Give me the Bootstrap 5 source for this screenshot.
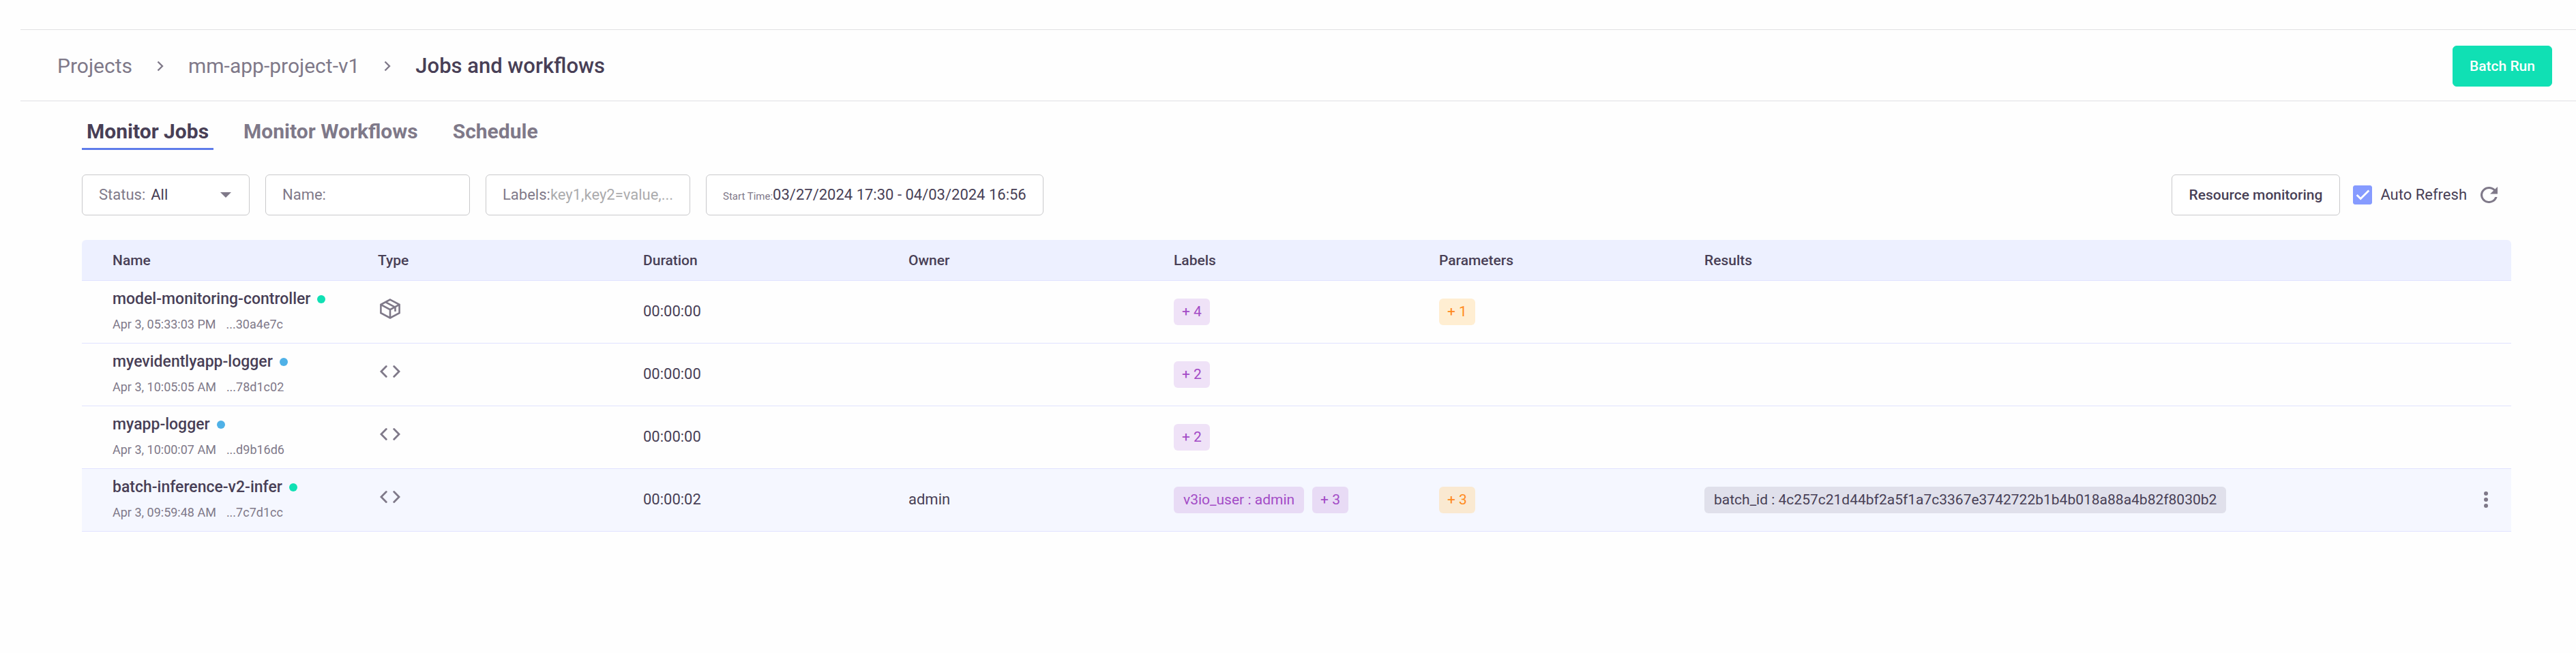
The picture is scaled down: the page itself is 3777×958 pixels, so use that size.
<!DOCTYPE html>
<html lang="en">
<head>
<meta charset="utf-8">
<meta name="viewport" content="width=device-width, initial-scale=1">
<title>Jobs and workflows</title>
<link href="https://cdn.jsdelivr.net/npm/bootstrap@5.3.0/dist/css/bootstrap.min.css" rel="stylesheet">
<style>
  :root { --ink: #483f56; --muted: #7f7989; --rule: #e0e2ff; --field: #c9c9cb; }
  body { font-family: Roboto, "Liberation Sans", sans-serif; font-size: 22px; line-height: 28px; color: var(--ink); background: #fefefe; }
  a { color: inherit; text-decoration: none; }
  .page-top { margin: 43px 0 0 30px; padding: 23px 35px 20px 54px; border-top: 1px solid #e0e0e2; border-bottom: 2px solid #eeeef0; }
  .crumbs { font-size: 30px; line-height: 36px; color: var(--muted); }
  .crumbs .breadcrumb-item + .breadcrumb-item { padding: 0; }
  .crumbs .breadcrumb-item + .breadcrumb-item::before { display: none; }
  .crumbs .active { color: var(--ink); font-weight: 500; font-size: 31px; }
  .crumb-sep { width: 36px; height: 36px; margin: 0 23px; }
  .btn { font-size: 21px; font-weight: 500; line-height: 28px; height: 60px; padding: 0 24px; border-radius: 6px; }
  .btn-run { --bs-btn-color: #fff; --bs-btn-bg: #10e0b4; --bs-btn-border-color: #10e0b4; --bs-btn-hover-color: #fff; --bs-btn-hover-bg: #0dcfa6; }
  .btn-plain { --bs-btn-color: var(--ink); --bs-btn-bg: #fff; --bs-btn-border-color: var(--field); padding: 0 25px; }
  .workspace { padding: 26px 95px 0 120px; }
  .tab-bar { gap: 37px; font-size: 30px; line-height: 36px; }
  .tab-bar .nav-link { font-weight: 700; color: var(--muted); padding: 0 7px 6px; border-bottom: 3px solid transparent; }
  .tab-bar .nav-link.active { color: var(--ink); border-color: #5e7bea; }
  .filters { gap: 23px; margin-top: 36px; }
  .field { height: 60px; padding: 0 24px; border: 1px solid var(--field); border-radius: 6px; background: #fff; color: var(--muted); }
  .field input, .field select { min-width: 0; flex: 1 1 0; border: 0; padding: 0; outline: 0; background-color: transparent; color: var(--ink); font-size: 22px; }
  .field input::placeholder { color: #ababad; opacity: 1; }
  .field-status { width: 246px; }
  .field-text { width: 300px; }
  .field-date { width: 495px; padding-right: 12px; }
  .field-date label { font-size: 15px; padding-top: 4px; }
  .field select { appearance: none; margin-left: 8px; background: url("data:image/svg+xml,%3Csvg xmlns='http://www.w3.org/2000/svg' viewBox='0 0 16 8'%3E%3Cpath d='M0 0h16L8 8z' fill='%237f7989'/%3E%3C/svg%3E") no-repeat right 2px center / 16px 8px; }
  .form-check-input.auto { width: 28px; height: 28px; margin: 0 12px 0 19px; border-radius: 3px; }
  .form-check-input.auto:checked { background-color: #869bff; border-color: #869bff; background-image: url("data:image/svg+xml,%3Csvg xmlns='http://www.w3.org/2000/svg' viewBox='0 0 28 28'%3E%3Cpath d='M5 14l6 6L24 7' fill='none' stroke='%23fff' stroke-width='3'/%3E%3C/svg%3E"); }
  .icon-btn { border: 0; padding: 0; background: none; color: var(--muted); line-height: 0; }
  .reload { margin: 0 20px; }
  .jobs { display: block; margin: 36px 0 0; color: var(--ink); }
  .jobs thead, .jobs tbody { display: block; }
  .jobs tr { display: grid; grid-template-columns: repeat(6, minmax(0, 1fr)) minmax(0, 2fr) minmax(0, 1fr); align-items: center; padding: 0 16px 0 45px; border-bottom: 1px solid var(--rule); height: 92px; }
  .jobs thead tr { height: 60px; background: #edf0ff; border-radius: 6px 6px 0 0; font-size: 21px; }
  .jobs th { font-weight: 500; }
  .jobs th { padding: 0; }
  .jobs td { padding: 0 0 2px; }
  .jobs tr.picked { background: #f5f7ff; }
  .job-name { font-size: 23px; font-weight: 500; line-height: 28px; }
  .job-meta { font-size: 18px; line-height: 24px; margin-top: 11px; gap: 15px; color: var(--muted); font-weight: 400; }
  .dot { width: 12px; height: 12px; margin-left: 10px; border-radius: 50%; background: #4fb1e7; }
  .dot-done { background: #10e0b4; }
  .jobs td.kind { color: var(--muted); line-height: 0; padding: 0 0 10px 3px; }
  .jobs td.chips { gap: 12px; padding: 0; }
  .chip { font-size: 21px; line-height: 39px; padding: 0 12px; border-radius: 6px; white-space: nowrap; }
  .chip-pair { padding: 0 14px; }
  .chip-label { background: #efe2f7; color: #a34bc6; }
  .chip-param { background: #ffeed2; color: #ff8a1c; }
  .picked .chip-label { background: #e8dbf5; }
  .picked .chip-param { background: #fae9d1; }
  .chip-result { background: #e0e0eb; }
  .row-menu { padding: 8px; }
</style>
</head>
<body>
<svg class="d-none" xmlns="http://www.w3.org/2000/svg">
  <symbol id="sep" viewBox="0 0 36 36"><path d="M14.500 11.500 21 18l-6.500 6.500" fill="none" stroke="currentColor" stroke-width="2.400"/></symbol>
  <symbol id="code" viewBox="0 0 30 30"><path d="M9.300 7.500 1.900 15l7.400 7.500M20.700 7.500 28.100 15l-7.400 7.500" fill="none" stroke="currentColor" stroke-width="2.800" stroke-linecap="round"/></symbol>
  <symbol id="box" viewBox="0 0 30 30"><path d="M15 1.600 28.600 8.900v12.200L15 28.400 1.400 21.100V8.900zM1.400 8.900 15 16.200l13.600-7.300M15 16.200v12.200M8.200 5.200 22.500 12.800V19" fill="none" stroke="currentColor" stroke-width="2.600"/></symbol>
</svg>

<header class="page-top d-flex align-items-start justify-content-between">
  <nav aria-label="breadcrumb" class="align-self-center">
    <ol class="breadcrumb crumbs mb-0 align-items-center">
      <li class="breadcrumb-item"><a href="#">Projects</a></li>
      <li class="d-flex" aria-hidden="true"><svg class="crumb-sep"><use href="#sep"/></svg></li>
      <li class="breadcrumb-item"><a href="#">mm-app-project-v1</a></li>
      <li class="d-flex" aria-hidden="true"><svg class="crumb-sep"><use href="#sep"/></svg></li>
      <li class="breadcrumb-item active" aria-current="page">Jobs and workflows</li>
    </ol>
  </nav>
  <button type="button" class="btn btn-run">Batch Run</button>
</header>

<main class="workspace">
  <nav class="nav tab-bar">
    <a class="nav-link active" href="#">Monitor Jobs</a>
    <a class="nav-link" href="#">Monitor Workflows</a>
    <a class="nav-link" href="#">Schedule</a>
  </nav>

  <form class="filters d-flex flex-wrap align-items-center">
    <div class="field field-status d-flex align-items-center">
      <label for="status">Status:</label>
      <select id="status"><option>All</option></select>
    </div>
    <div class="field field-text d-flex align-items-center">
      <label for="name">Name:</label>
      <input id="name" type="text">
    </div>
    <div class="field field-text d-flex align-items-center">
      <label for="labels">Labels:</label>
      <input id="labels" type="text" placeholder="key1,key2=value,...">
    </div>
    <div class="field field-date d-flex align-items-center">
      <label for="start">Start Time:</label>
      <input id="start" type="text" value="03/27/2024 17:30 - 04/03/2024 16:56">
    </div>
    <div class="d-flex align-items-center ms-auto">
      <button type="button" class="btn btn-plain">Resource monitoring</button>
      <input class="form-check-input auto" type="checkbox" id="auto" checked>
      <label for="auto">Auto Refresh</label>
      <button type="button" class="icon-btn reload" aria-label="Refresh">
        <svg width="25" height="24" viewBox="4 4 16 16" preserveAspectRatio="none"><path fill="currentColor" d="M17.650 6.350A7.960 7.960 0 0 0 12 4a8 8 0 1 0 7.730 10h-2.080A6 6 0 1 1 12 6c1.660 0 3.140.690 4.220 1.780L13 11h7V4z"/></svg>
      </button>
    </div>
  </form>

  <table class="jobs">
    <thead>
      <tr><th>Name</th><th>Type</th><th>Duration</th><th>Owner</th><th>Labels</th><th>Parameters</th><th>Results</th><th aria-label="Actions"></th></tr>
    </thead>
    <tbody>
      <tr>
        <td><div class="job-name d-flex align-items-center"><a href="#">model-monitoring-controller</a><span class="dot dot-done"></span></div><div class="job-meta d-flex"><span>Apr 3, 05:33:03 PM</span><span>...30a4e7c</span></div></td>
        <td class="kind"><svg width="30" height="30"><use href="#box"/></svg></td>
        <td>00:00:00</td><td></td>
        <td class="chips d-flex"><span class="chip chip-label">+ 4</span></td>
        <td class="chips d-flex"><span class="chip chip-param">+ 1</span></td>
        <td></td><td></td>
      </tr>
      <tr>
        <td><div class="job-name d-flex align-items-center"><a href="#">myevidentlyapp-logger</a><span class="dot"></span></div><div class="job-meta d-flex"><span>Apr 3, 10:05:05 AM</span><span>...78d1c02</span></div></td>
        <td class="kind"><svg width="30" height="30"><use href="#code"/></svg></td>
        <td>00:00:00</td><td></td>
        <td class="chips d-flex"><span class="chip chip-label">+ 2</span></td>
        <td></td><td></td><td></td>
      </tr>
      <tr>
        <td><div class="job-name d-flex align-items-center"><a href="#">myapp-logger</a><span class="dot"></span></div><div class="job-meta d-flex"><span>Apr 3, 10:00:07 AM</span><span>...d9b16d6</span></div></td>
        <td class="kind"><svg width="30" height="30"><use href="#code"/></svg></td>
        <td>00:00:00</td><td></td>
        <td class="chips d-flex"><span class="chip chip-label">+ 2</span></td>
        <td></td><td></td><td></td>
      </tr>
      <tr class="picked">
        <td><div class="job-name d-flex align-items-center"><a href="#">batch-inference-v2-infer</a><span class="dot dot-done"></span></div><div class="job-meta d-flex"><span>Apr 3, 09:59:48 AM</span><span>...7c7d1cc</span></div></td>
        <td class="kind"><svg width="30" height="30"><use href="#code"/></svg></td>
        <td>00:00:02</td><td>admin</td>
        <td class="chips d-flex"><span class="chip chip-pair chip-label">v3io_user : admin</span><span class="chip chip-label">+ 3</span></td>
        <td class="chips d-flex"><span class="chip chip-param">+ 3</span></td>
        <td class="chips d-flex"><span class="chip chip-pair chip-result">batch_id : 4c257c21d44bf2a5f1a7c3367e3742722b1b4b018a88a4b82f8030b2</span></td>
        <td class="text-end"><button type="button" class="icon-btn row-menu" aria-label="Row actions"><svg width="26" height="24" viewBox="0 0 26 24" fill="currentColor"><circle cx="13" cy="3" r="3"/><circle cx="13" cy="12" r="3"/><circle cx="13" cy="21" r="3"/></svg></button></td>
      </tr>
    </tbody>
  </table>
</main>
<script src="https://cdn.jsdelivr.net/npm/bootstrap@5.3.0/dist/js/bootstrap.bundle.min.js"></script>
</body>
</html>
